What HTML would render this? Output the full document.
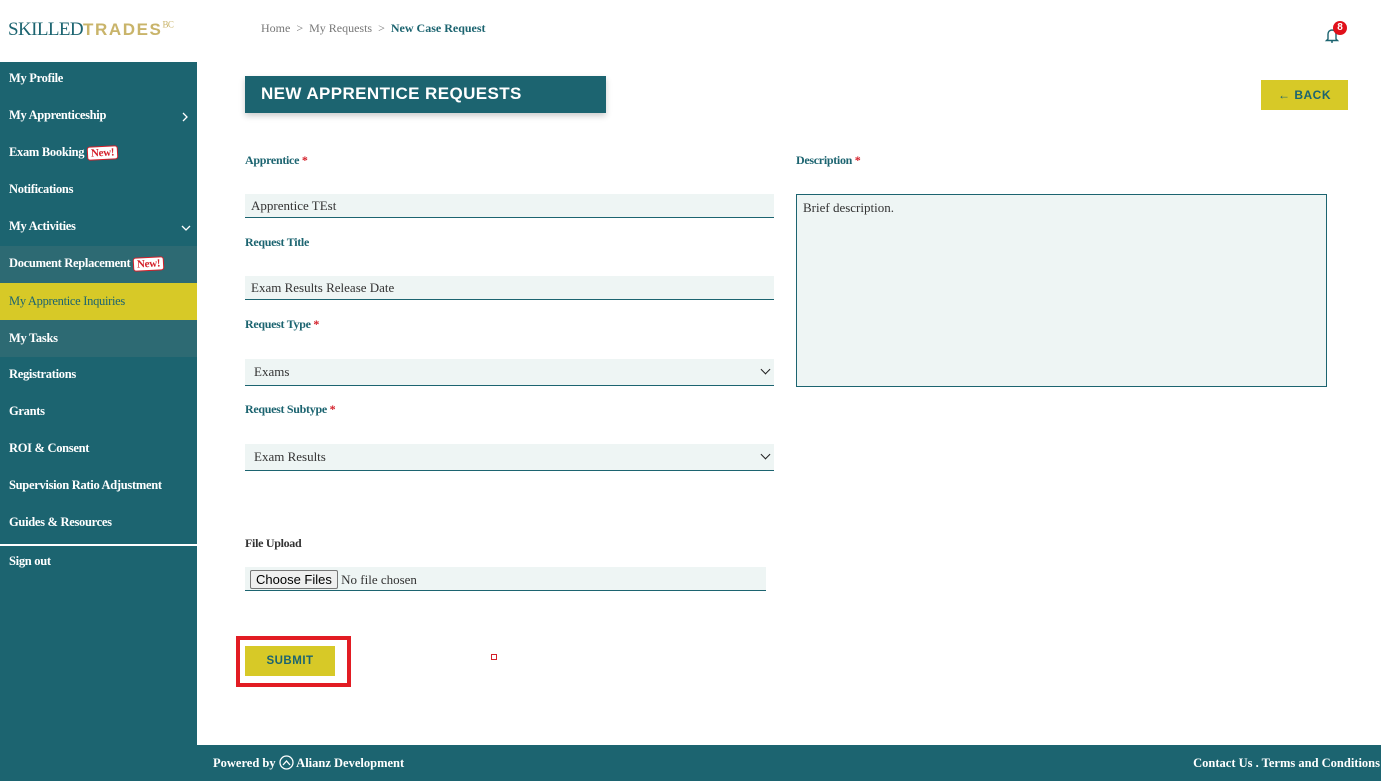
<!DOCTYPE html>
<html><head><meta charset="utf-8"><style>
*{box-sizing:border-box;margin:0;padding:0}
body{width:1381px;height:781px;position:relative;background:#fff;font-family:"Liberation Serif",serif;overflow:hidden}
.abs{position:absolute}
.logo{left:8px;top:19px;font-size:19px;color:#1c6470;letter-spacing:-0.6px}
.logo b{font-family:"Liberation Sans",sans-serif;color:#c9b46a;font-weight:900;letter-spacing:1.6px;font-size:17px}
.logo sup{font-size:9px;color:#c9b46a}
.crumb{left:261px;top:21px;font-size:12px;color:#777}
.crumb strong{color:#1c6470}
.side{left:0;top:62px;width:197px;height:719px;background:#1c6470}
.it{position:absolute;left:0;width:197px;height:37px;line-height:32px;padding-left:9px;color:#fff;font-weight:bold;font-size:12.5px;letter-spacing:-0.3px}
.new{display:inline-block;background:#fff;color:#d4202a;border:1.5px solid #d4202a;border-radius:3px;font-size:11px;line-height:12px;padding:0 3px;margin-left:3px;transform:rotate(-3deg)}
.title{left:245px;top:76px;width:361px;height:37px;background:#1c6470;color:#fff;font-family:"Liberation Sans",sans-serif;font-weight:900;font-size:17px;line-height:35px;padding-left:16px;letter-spacing:0.4px;box-shadow:0 3px 6px rgba(0,0,0,.2)}
.back{left:1261px;top:80px;width:87px;height:30px;background:#d7c927;color:#1c6470;font-family:"Liberation Sans",sans-serif;font-weight:bold;font-size:12px;text-align:center;line-height:30px;letter-spacing:0.5px}
.lbl{font-size:12px;font-weight:bold;color:#1c6470;letter-spacing:-0.3px}
.lbl i{color:#d4202a;font-style:normal}
.inp{background:#eef5f4;border-bottom:1px solid #1c6470;height:24px;font-size:13px;color:#333;line-height:24px;padding-left:6px}
.sel{padding-left:9px}
.sel:after{content:"";position:absolute;right:5px;top:7px;width:6px;height:6px;border-right:1.6px solid #222;border-bottom:1.6px solid #222;transform:rotate(45deg)}
.footer{left:197px;top:745px;width:1184px;height:36px;background:#1c6470;color:#fff;font-weight:bold;font-size:12.5px;line-height:37px}
</style></head><body>
<div class="abs logo">SKILLED<b>TRADES</b><sup>BC</sup></div>
<div class="abs crumb">Home &nbsp;&gt;&nbsp; My Requests &nbsp;&gt;&nbsp; <strong>New Case Request</strong></div>
<svg class="abs" style="left:1324px;top:26px" width="16" height="18" viewBox="0 0 16 18"><path d="M4 13V8a4 4 0 0 1 8 0v5l1.5 1.5h-11z" fill="none" stroke="#1c6470" stroke-width="1.4"/><path d="M7 16h2" stroke="#1c6470" stroke-width="1.4"/></svg>
<div class="abs" style="left:1333px;top:21px;width:14px;height:14px;border-radius:50%;background:#e0101a;color:#fff;font-size:10px;font-weight:bold;text-align:center;line-height:14px;font-family:'Liberation Sans',sans-serif">8</div>
<div class="abs side">
<div class="it" style="top:0">My Profile</div>
<div class="it" style="top:37px">My Apprenticeship<svg style="position:absolute;right:9px;top:13px" width="6" height="10" viewBox="0 0 6 10"><path d="M1 1l4 4-4 4" fill="none" stroke="#fff" stroke-width="1.3"/></svg></div>
<div class="it" style="top:74px">Exam Booking<span class="new">New!</span></div>
<div class="it" style="top:111px">Notifications</div>
<div class="it" style="top:148px">My Activities<svg style="position:absolute;right:6px;top:15px" width="10" height="6" viewBox="0 0 10 6"><path d="M1 1l4 4 4-4" fill="none" stroke="#fff" stroke-width="1.3"/></svg></div>
<div class="it" style="top:184px;background:#2d6a73;line-height:34px">Document Replacement<span class="new">New!</span></div>
<div class="it" style="top:221px;background:#d7c927;color:#1c6470;font-weight:normal;line-height:37px">My Apprentice Inquiries</div>
<div class="it" style="top:258px;background:#2d6a73;line-height:36px">My Tasks</div>
<div class="it" style="top:296px">Registrations</div>
<div class="it" style="top:333px">Grants</div>
<div class="it" style="top:370px">ROI &amp; Consent</div>
<div class="it" style="top:407px">Supervision Ratio Adjustment</div>
<div class="it" style="top:444px">Guides &amp; Resources</div>
<div class="abs" style="left:0;top:482px;width:197px;height:2px;background:#fff"></div>
<div class="it" style="top:482px;line-height:34px">Sign out</div>
</div>
<div class="abs title">NEW APPRENTICE REQUESTS</div>
<div class="abs back">← BACK</div>
<div class="abs lbl" style="left:245px;top:153px">Apprentice <i>*</i></div>
<div class="abs inp" style="left:245px;top:194px;width:529px">Apprentice TEst</div>
<div class="abs lbl" style="left:245px;top:235px">Request Title</div>
<div class="abs inp" style="left:245px;top:276px;width:529px">Exam Results Release Date</div>
<div class="abs lbl" style="left:245px;top:317px">Request Type <i>*</i></div>
<div class="abs inp sel" style="left:245px;top:359px;width:529px;height:27px;line-height:26px">Exams</div>
<div class="abs lbl" style="left:245px;top:402px">Request Subtype <i>*</i></div>
<div class="abs inp sel" style="left:245px;top:444px;width:529px;height:27px;line-height:26px">Exam Results</div>
<div class="abs lbl" style="left:245px;top:536px;color:#333">File Upload</div>
<div class="abs inp" style="left:245px;top:567px;width:521px;padding-left:5px;line-height:26px"><span style="display:inline-block;font-family:'Liberation Sans',sans-serif;font-size:13px;border:1px solid #777;background:#efefef;border-radius:2px;height:19px;line-height:17px;padding:0 5px;color:#000">Choose Files</span> No file chosen</div>
<div class="abs lbl" style="left:796px;top:153px">Description <i>*</i></div>
<div class="abs" style="left:796px;top:194px;width:531px;height:193px;background:#eef5f4;border:1px solid #1c6470;font-size:13px;color:#333;padding:5px 6px">Brief description.</div>
<div class="abs" style="left:236px;top:636px;width:115px;height:51px;border:4px solid #e21c23"></div>
<div class="abs back" style="left:245px;top:646px;width:90px;height:30px;font-size:11.5px">SUBMIT</div>
<div class="abs" style="left:491px;top:654px;width:6px;height:6px;border:1.5px solid #d4202a"></div>
<div class="abs footer"><span style="position:absolute;left:16px">Powered by <svg width="15" height="15" viewBox="0 0 15 15" style="vertical-align:-3px"><circle cx="7.5" cy="7.5" r="6.5" fill="none" stroke="#fff" stroke-width="1.3"/><path d="M4 10l3.5-4 3.5 4" fill="none" stroke="#fff" stroke-width="1.3"/></svg> Alianz Development</span><span style="position:absolute;right:1px">Contact Us . Terms and Conditions</span></div>
</body></html>
